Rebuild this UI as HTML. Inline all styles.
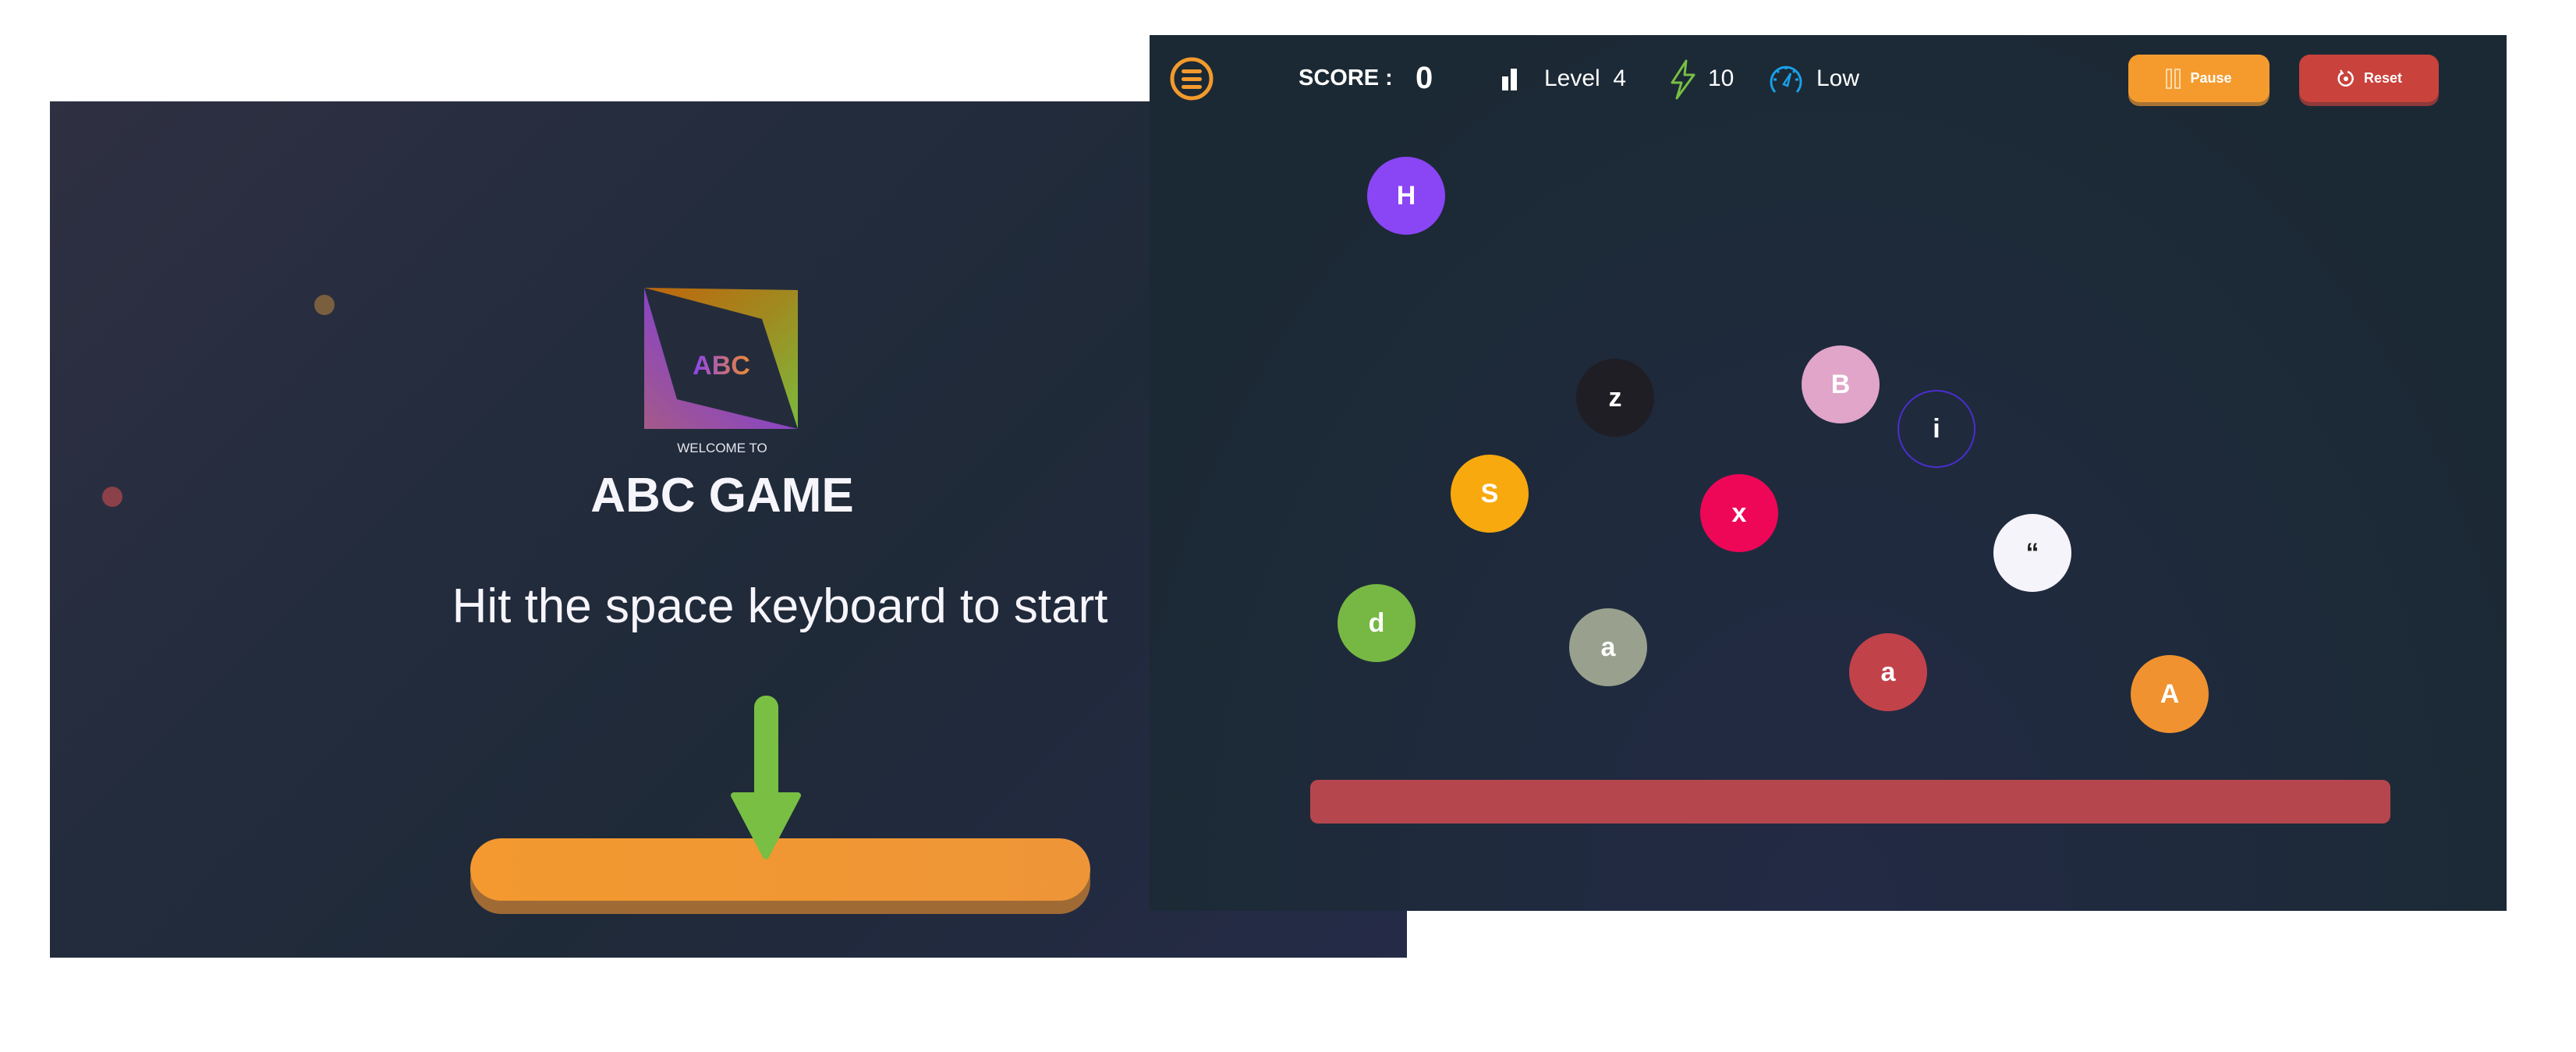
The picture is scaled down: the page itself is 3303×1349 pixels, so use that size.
<!DOCTYPE html>
<html><head><meta charset="utf-8"><style>
*{margin:0;padding:0;box-sizing:border-box}
body{width:3303px;height:1349px;background:#fff;position:relative;overflow:hidden;font-family:"Liberation Sans",sans-serif}
.abs{position:absolute}
#left{left:64px;top:130px;width:1740px;height:1098px;background:linear-gradient(135deg,#2f3042 0%,#232c3d 35%,#1f2a38 60%,#252b47 100%)}
#right{left:1474px;top:45px;width:1740px;height:1123px;background:radial-gradient(ellipse at 50% 100%,#232a45 0%,#1e2a3a 50%,#1b2934 80%)}
.ball{position:absolute;width:100px;height:100px;border-radius:50%;color:#fff;font-weight:bold;font-size:34px;display:flex;align-items:center;justify-content:center}
.t{color:#fff;white-space:nowrap}
</style></head><body>
<div id="left" class="abs">
  <div class="abs" style="left:339px;top:248px;width:26px;height:26px;border-radius:50%;background:#7a5f3e"></div>
  <div class="abs" style="left:67px;top:494px;width:26px;height:26px;border-radius:50%;background:#8c4049"></div>
</div>
<svg class="abs" style="left:826px;top:369px" width="198" height="182" viewBox="0 0 198 182">
<defs>
<linearGradient id="g1" x1="0" y1="0" x2="1" y2="1"><stop offset="0" stop-color="#c0650c"/><stop offset="0.5" stop-color="#a08a20"/><stop offset="1" stop-color="#7cbb3c"/></linearGradient>
<linearGradient id="g2" x1="0" y1="1" x2="1" y2="0"><stop offset="0" stop-color="#a45a88"/><stop offset="0.5" stop-color="#8945c4"/><stop offset="1" stop-color="#7a3ee0"/></linearGradient>
<linearGradient id="g3" x1="0" y1="0" x2="1" y2="0"><stop offset="0" stop-color="#8a44f0"/><stop offset="1" stop-color="#f08a30"/></linearGradient>
</defs>
<rect x="0" y="0" width="197" height="181" fill="#242c3c"/>
<polygon points="0,0 197,3 197,181 151,40" fill="url(#g1)"/>
<polygon points="0,0 42,143 197,181 0,181" fill="url(#g2)"/>
<text x="99" y="111" text-anchor="middle" font-family="Liberation Sans" font-weight="bold" font-size="34" fill="url(#g3)">ABC</text>
</svg>
<div class="abs t" style="left:826px;top:565px;width:200px;text-align:center;font-size:17px;color:#e6e6ee">WELCOME TO</div>
<div class="abs t" style="left:676px;top:600px;width:500px;text-align:center;font-size:62px;font-weight:bold;color:#f7f5fc">ABC GAME</div>
<div class="abs t" style="left:500px;top:742px;width:1000px;text-align:center;font-size:62px;color:#f7f5fc">Hit the space keyboard to start</div>
<div class="abs" style="left:603px;top:1087px;width:795px;height:85px;border-radius:40px;background:#a06a35"></div>
<div class="abs" style="left:603px;top:1075px;width:795px;height:80px;border-radius:40px;background:linear-gradient(90deg,#f3992f,#ee9538)"></div>
<svg class="abs" style="left:936px;top:890px" width="92" height="212" viewBox="0 0 92 212">
<rect x="31" y="2" width="31" height="150" rx="15" fill="#78bf44"/>
<polygon points="5,130 87,130 46,208" fill="#78bf44" stroke="#78bf44" stroke-width="8" stroke-linejoin="round"/>
</svg>

<div id="right" class="abs"></div>
<svg class="abs" style="left:1498px;top:71px" width="60" height="60" viewBox="0 0 60 60">
<circle cx="30" cy="30" r="25" fill="none" stroke="#f39a2d" stroke-width="5"/>
<rect x="17" y="18" width="26" height="5" rx="2.5" fill="#f39a2d"/><rect x="17" y="28" width="26" height="5" rx="2.5" fill="#f39a2d"/><rect x="17" y="38" width="26" height="5" rx="2.5" fill="#f39a2d"/>
</svg>
<div class="abs t" style="left:1665px;top:84px;font-size:29px;font-weight:bold">SCORE :</div>
<div class="abs t" style="left:1815px;top:78px;font-size:40px;font-weight:bold">0</div>
<div class="abs" style="left:1926px;top:98px;width:8px;height:18px;background:#fff"></div>
<div class="abs" style="left:1937px;top:88px;width:8px;height:28px;background:#fff"></div>
<div class="abs t" style="left:1980px;top:84px;font-size:30px">Level&nbsp; 4</div>
<svg class="abs" style="left:2138px;top:76px" width="40" height="52" viewBox="0 0 40 52"><path d="M24 2 L6 30 L18 30 L12 50 L34 20 L22 20 Z" fill="none" stroke="#78bf44" stroke-width="3" stroke-linejoin="round"/></svg>
<div class="abs t" style="left:2190px;top:84px;font-size:30px">10</div>
<svg class="abs" style="left:2266px;top:80px" width="48" height="42" viewBox="0 0 48 42"><path d="M10 38 A19 19 0 1 1 38 38" fill="none" stroke="#1aa0e8" stroke-width="3"/><path d="M24 5v4M8 22h4M36 22h4M12 10l3 3M36 10l-3 3" stroke="#1aa0e8" stroke-width="3"/><path d="M21 28 L30 14 L26 30 Z" fill="none" stroke="#1aa0e8" stroke-width="2.5"/></svg>
<div class="abs t" style="left:2329px;top:84px;font-size:30px">Low</div>
<div class="abs" style="left:2729px;top:70px;width:181px;height:66px;border-radius:14px;background:#a87433"></div>
<div class="abs" style="left:2729px;top:70px;width:181px;height:61px;border-radius:14px;background:#f59b2e;display:flex;align-items:center;justify-content:center"><span style="display:inline-block;width:8px;height:26px;border:2px solid #fcd9a8;margin-right:3px"></span><span style="display:inline-block;width:8px;height:26px;border:2px solid #fcd9a8;margin-right:12px"></span><span class="t" style="font-size:18px;font-weight:bold">Pause</span></div>
<div class="abs" style="left:2948px;top:70px;width:179px;height:66px;border-radius:14px;background:#8e3a3a"></div>
<div class="abs" style="left:2948px;top:70px;width:179px;height:61px;border-radius:14px;background:#c9423b;display:flex;align-items:center;justify-content:center"><svg width="26" height="26" viewBox="0 0 26 26" style="margin-right:10px"><path d="M8 5 A9 9 0 1 0 15 4" fill="none" stroke="#fff" stroke-width="2.5"/><path d="M6 2 L9 6 L5 8" fill="none" stroke="#fff" stroke-width="2"/><circle cx="13" cy="13" r="3" fill="#fff"/></svg><span class="t" style="font-size:18px;font-weight:bold">Reset</span></div>

<div class="ball" style="left:1753px;top:201px;background:#8a45f5">H</div>
<div class="ball" style="left:2021px;top:460px;background:#1f1e24">z</div>
<div class="ball" style="left:2310px;top:443px;background:#e0a5c8">B</div>
<div class="ball" style="left:2433px;top:500px;border:2px solid #4a2ed0">i</div>
<div class="ball" style="left:1860px;top:583px;background:#f7a90e">S</div>
<div class="ball" style="left:2180px;top:608px;background:#ee0757">x</div>
<div class="ball" style="left:2556px;top:659px;background:#f6f4fb;color:#222">“</div>
<div class="ball" style="left:1715px;top:749px;background:#76b843">d</div>
<div class="ball" style="left:2012px;top:780px;background:#99a18e">a</div>
<div class="ball" style="left:2371px;top:812px;background:#c2424a">a</div>
<div class="ball" style="left:2732px;top:840px;background:#f0922f">A</div>
<div class="abs" style="left:1680px;top:1000px;width:1385px;height:56px;border-radius:10px;background:#b5464e"></div>
</body></html>
